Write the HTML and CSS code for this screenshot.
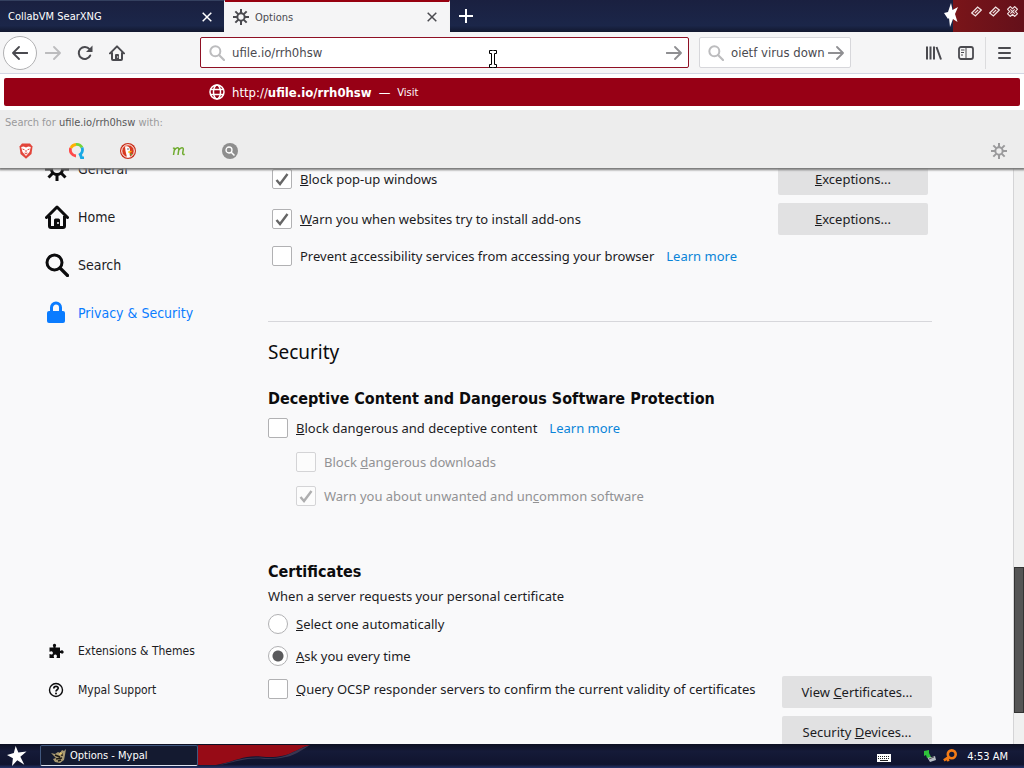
FILE: index.html
```html
<!DOCTYPE html>
<html lang="en">

<head>
    <meta charset="UTF-8">
    <meta name="viewport" content="width=device-width, initial-scale=1.0">
    <title>Options</title>
    <link rel="stylesheet" href="styles.css">
</head>

<body>

    <!-- Shared icons -->
    <svg class="sprite" aria-hidden="true">
        <symbol id="gear" viewBox="0 0 24 24">
            <circle cx="12" cy="12" r="5.5" fill="none" stroke="currentColor" stroke-width="3" />
            <path d="M12 0v6M12 18v6M0 12h6M18 12h6M3.5 3.5l4.2 4.2M16.3 16.3l4.2 4.2M20.5 3.5l-4.2 4.2M7.7 16.3l-4.2 4.2" stroke="currentColor" stroke-width="3" />
        </symbol>
        <symbol id="home" viewBox="0 0 24 24">
            <path d="M1.5 12.5L12 2l10.500 10.500" fill="none" stroke="currentColor" stroke-width="3" stroke-linecap="round" stroke-linejoin="round" />
            <path d="M4.500 11v10a1.500 1.500 0 0 0 1.500 1.500h12a1.500 1.500 0 0 0 1.500-1.500V11" fill="none" stroke="currentColor" stroke-width="3" />
            <path d="M9 23v-8a1.500 1.500 0 0 1 1.500-1.500h3A1.500 1.500 0 0 1 15 15v8z" fill="currentColor" />
            <circle cx="13" cy="18" r="1" fill="#f9f9fa" />
        </symbol>
        <symbol id="search" viewBox="0 0 24 24">
            <circle cx="9.500" cy="9.500" r="7.500" fill="none" stroke="currentColor" stroke-width="3" />
            <path d="M15 15l7.500 7.500" stroke="currentColor" stroke-width="3.200" stroke-linecap="round" />
        </symbol>
        <symbol id="arrow" viewBox="0 0 16 16">
            <path d="M0.500 8h14M9 2l6 6-6 6" fill="none" stroke="currentColor" stroke-width="1.800" stroke-linecap="round" stroke-linejoin="round" />
        </symbol>
        <symbol id="close" viewBox="0 0 10 10">
            <path d="M0.700 0.700l8.600 8.600M9.300 0.700L0.700 9.300" stroke="currentColor" stroke-width="1.500" />
        </symbol>
        <symbol id="star" viewBox="0 0 22 22">
            <path d="M9.500 0l3 7.200L21.500 6l-6.800 5.800 4.300 8.700-7.700-4.800L5.500 22l1-8.500L0 10l7.500-2.200z" fill="#fff" />
        </symbol>
        <symbol id="diamond" viewBox="0 0 10 10">
            <path d="M0.700 6.300L6 1l3.300 2.700L4 9z" fill="none" stroke="#f0e2e2" stroke-width="1.200" />
            <path d="M3.500 6.500l3-3" stroke="#f0e2e2" stroke-width="1.200" />
        </symbol>
    </svg>

    <header class="titlebar">
        <div class="tab">
            <span class="tab-title">CollabVM SearXNG</span>
            <button class="tab-close" aria-label="Close tab"><svg><use href="#close" /></svg></button>
        </div>
        <div class="tab active">
            <svg class="tab-icon"><use href="#gear" /></svg>
            <span class="tab-title">Options</span>
            <button class="tab-close" aria-label="Close tab"><svg><use href="#close" /></svg></button>
        </div>
        <button class="new-tab" aria-label="New tab">
            <svg viewBox="0 0 14 14"><path d="M7 0v14M0 7h14" stroke="currentColor" stroke-width="2" /></svg>
        </button>
        <div class="window-controls">
            <svg class="window-star" viewBox="0 0 14 24"><path d="M7 0l1.500 7L14 4l-3 7 2.500 8-4.500-3-3 8-1-9-1 1L0 10l4-1z" fill="#fff" /></svg>
            <button aria-label="Minimize"><svg><use href="#diamond" /></svg></button>
            <button aria-label="Maximize"><svg><use href="#diamond" /></svg></button>
            <button aria-label="Close"><svg viewBox="0 0 10 10"><path d="M3 0.500L5 2.500l2-2L9.500 3l-2 2 2 2L7 9.500l-2-2-2 2L0.500 7l2-2-2-2z" fill="none" stroke="#f0e2e2" /><path d="M3 3l4 4M7 3L3 7" stroke="#f0e2e2" /></svg></button>
        </div>
    </header>

    <nav class="navbar">
        <button class="back" aria-label="Back"><svg class="flip"><use href="#arrow" /></svg></button>
        <button class="tool faded" aria-label="Forward"><svg><use href="#arrow" /></svg></button>
        <button class="tool" aria-label="Reload">
            <svg viewBox="0 0 16 16"><path d="M13.200 10.500A6 6 0 1 1 12.500 4.200" fill="none" stroke="currentColor" stroke-width="2" stroke-linecap="round" /><path d="M15.500 0.500V7H9z" fill="currentColor" /></svg>
        </button>
        <button class="tool" aria-label="Home"><svg><use href="#home" /></svg></button>
        <div class="field urlbar">
            <svg class="glass"><use href="#search" /></svg>
            <input type="text" aria-label="Address" value="ufile.io/rrh0hsw">
            <button aria-label="Go"><svg><use href="#arrow" /></svg></button>
        </div>
        <div class="field searchbar">
            <svg class="glass"><use href="#search" /></svg>
            <input type="text" aria-label="Web search" value="oietf virus down">
            <button aria-label="Search"><svg><use href="#arrow" /></svg></button>
        </div>
        <div class="nav-end">
            <button class="tool" aria-label="Library">
                <svg viewBox="0 0 16 16"><path d="M1 1.500v13M4.500 1.500v13M8 1.500v13M10.500 2l4.500 12.500" fill="none" stroke="currentColor" stroke-width="2" /></svg>
            </button>
            <button class="tool" aria-label="Sidebars">
                <svg viewBox="0 0 16 16"><rect x="1" y="2" width="14" height="12" rx="2" fill="none" stroke="currentColor" stroke-width="1.800" /><path d="M8 2v12M3 5h3.500M3 7.500h3M3 10h2" fill="none" stroke="currentColor" /></svg>
            </button>
            <button class="tool menu" aria-label="Menu">
                <svg viewBox="0 0 16 16"><path d="M3 3h11M3 8h11M3 13h11" stroke="currentColor" stroke-width="2" stroke-linecap="round" /></svg>
            </button>
        </div>
        <!-- Text cursor -->
        <svg class="cursor" viewBox="0 0 8 18"><path d="M0.500 0.500h3l.5.500.5-.500h3v3h-2v11h2v3h-3l-.5-.500-.5.500h-3v-3h2v-11h-2z" fill="#fff" stroke="#000" /></svg>
    </nav>

    <div class="page">
        <div class="popup">
            <a class="result" href="#">
                <svg viewBox="0 0 16 16" fill="none" stroke="#fff" stroke-width="1.500"><circle cx="8" cy="8" r="7" /><ellipse cx="8" cy="8" rx="3.500" ry="7" /><path d="M1.500 5.500h13M1.500 10.500h13" /></svg>
                <span>http://<b>ufile.io/rrh0hsw</b></span>
                <span>—</span>
                <span class="visit">Visit</span>
            </a>
            <div class="engines">
                <p>Search for <span>ufile.io/rrh0hsw</span> with:</p>
                <div class="engine-row">
                    <button aria-label="Brave">
                        <svg viewBox="0 0 16 16"><path d="M4 0.500h8l2.500 3-1 7.500L8 15.700 2.500 11l-1-7.500z" fill="#e2453b" /><path d="M3.200 4l2.500-.5L8 4.500l2.300-1 2.500.5-1.300 5L8 13 4.500 9z" fill="#fff" /><path d="M4.500 6l2 .8M11.500 6l-2 .8M8 7v2.500M6.500 10L8 11l1.500-1" fill="none" stroke="#e2453b" /></svg>
                    </button>
                    <button aria-label="Qwant">
                        <svg viewBox="0 0 16 16" fill="none" stroke-width="2.800"><path d="M7 13A6 6 0 0 1 1.700 5" stroke="#ff4a4a" /><path d="M2 5a6 6 0 0 1 5-3.500" stroke="#ffb000" /><path d="M7 1.500a6 6 0 0 1 6 3" stroke="#75d43c" /><path d="M13 4.500A6 6 0 0 1 10 12.300M11 10l1.500 5H15" stroke="#19a9e5" /></svg>
                    </button>
                    <button aria-label="DuckDuckGo">
                        <svg viewBox="0 0 16 16"><circle cx="8" cy="8" r="8" fill="#c9301c" /><circle cx="8" cy="8" r="6.300" fill="#d93a20" stroke="#fff" /><path d="M5 3.500c3-1 5 .5 5 3.500l-.5 2 .5 5-3 .3L5.500 8z" fill="#fff" /><path d="M8 8.500l4-.8-1 1.600-2.500.7z" fill="#ffc400" /><circle cx="8" cy="6" r=".7" fill="#234" /><path d="M9.500 11l2.500-.5v2z" fill="#55ad3c" /></svg>
                    </button>
                    <button aria-label="Mojeek">
                        <svg viewBox="0 0 16 16"><path d="M2 5.500q1.500-1 1.500.5L2.500 12M3.500 7C5.500 4 8 4 7.800 6.500L7 12M7.800 7C10 4 12.500 4 12.300 6.500L11.700 10q0 2 2 1.200" fill="none" stroke="#6fab2f" stroke-width="1.500" /></svg>
                    </button>
                    <button aria-label="Other engine">
                        <svg viewBox="0 0 16 16"><circle cx="8" cy="8" r="8" fill="#8e8e8e" /><circle cx="7" cy="7" r="3" fill="none" stroke="#fff" stroke-width="1.300" /><path d="M9.200 9.200l3.300 3.300" stroke="#fff" stroke-width="1.500" /></svg>
                    </button>
                    <button class="engine-settings" aria-label="Change search settings"><svg><use href="#gear" /></svg></button>
                </div>
            </div>
        </div>

        <aside class="sidebar">
            <a class="category" href="#"><svg><use href="#gear" /></svg>General</a>
            <a class="category" href="#"><svg><use href="#home" /></svg>Home</a>
            <a class="category" href="#"><svg><use href="#search" /></svg>Search</a>
            <a class="category selected" href="#">
                <svg viewBox="0 0 24 24"><path d="M6.500 11V6.500a4.500 4.500 0 0 1 9 0V11" fill="none" stroke="currentColor" stroke-width="3" /><rect x="2" y="10" width="18" height="12" rx="2" fill="currentColor" /></svg>
                Privacy &amp; Security
            </a>
            <div class="sidebar-footer">
                <a class="extra" href="#">
                    <svg viewBox="0 0 16 16"><path d="M1.500 4.500h4c0-1-1-1.500-.5-2.800a1.700 1.700 0 0 1 3 0c.5 1.300-.5 1.800-.5 2.800H12V8c1 0 1.500-1 2.700-.6a1.800 1.800 0 0 1 0 3.200C13.500 11 13 10 12 10v5H8.500c0-1 .8-1.500.3-2.600a1.700 1.700 0 0 0-3 0c-.5 1.100.4 1.600.4 2.600H1.500v-4c1 0 1.500.8 2.500.4a1.700 1.700 0 0 0 0-3C3 8 2.500 8.800 1.500 8.800z" fill="currentColor" /></svg>
                    Extensions &amp; Themes
                </a>
                <a class="extra" href="#">
                    <svg viewBox="0 0 16 16"><circle cx="8" cy="8" r="6.500" fill="none" stroke="currentColor" stroke-width="1.400" /><path d="M5.800 6.500c0-3 4.600-2.800 4.400-.2C10.100 7.700 8 7.800 8 9.500" fill="none" stroke="currentColor" stroke-width="1.700" /><circle cx="8" cy="11.600" r="1" fill="currentColor" /></svg>
                    Mypal Support
                </a>
            </div>
        </aside>

        <main class="content">
            <section class="permissions">
                <div class="row tall">
                    <input type="checkbox" id="popups" checked>
                    <label for="popups"><u>B</u>lock pop-up windows</label>
                    <button class="btn"><u>E</u>xceptions...</button>
                </div>
                <div class="row tall">
                    <input type="checkbox" id="addons" checked>
                    <label for="addons"><u>W</u>arn you when websites try to install add-ons</label>
                    <button class="btn"><u>E</u>xceptions...</button>
                </div>
                <div class="row">
                    <input type="checkbox" id="a11y">
                    <label for="a11y">Prevent <u>a</u>ccessibility services from accessing your browser</label>
                    <a class="learn" href="#">Learn more</a>
                </div>
            </section>

            <h2>Security</h2>

            <h3>Deceptive Content and Dangerous Software Protection</h3>
            <div class="row">
                <input type="checkbox" id="deceptive">
                <label for="deceptive"><u>B</u>lock dangerous and deceptive content</label>
                <a class="learn" href="#">Learn more</a>
            </div>
            <div class="row nested">
                <input type="checkbox" id="downloads" disabled>
                <label for="downloads">Block <u>d</u>angerous downloads</label>
            </div>
            <div class="row nested">
                <input type="checkbox" id="unwanted" checked disabled>
                <label for="unwanted">Warn you about unwanted and un<u>c</u>ommon software</label>
            </div>

            <h3 class="certificates">Certificates</h3>
            <p>When a server requests your personal certificate</p>
            <div class="row short">
                <input type="radio" name="cert" id="auto">
                <label for="auto"><u>S</u>elect one automatically</label>
            </div>
            <div class="row short">
                <input type="radio" name="cert" id="ask" checked>
                <label for="ask"><u>A</u>sk you every time</label>
            </div>
            <div class="split">
                <div class="row">
                    <input type="checkbox" id="ocsp">
                    <label for="ocsp"><u>Q</u>uery OCSP responder servers to confirm the current validity of certificates</label>
                </div>
                <div class="btn-column">
                    <button class="btn">View <u>C</u>ertificates...</button>
                    <button class="btn">Security <u>D</u>evices...</button>
                </div>
            </div>
        </main>

        <div class="scrollbar"><div class="thumb"></div></div>
    </div>

    <footer class="taskbar">
        <button class="start" aria-label="Start"><svg><use href="#star" /></svg></button>
        <button class="task">
            <svg viewBox="0 0 16 14"><path d="M0 4l4 1 3-2 2 1 2-3 2 1 2-2-1 6-1 5-4 3-5-1-2-3 3-1z" fill="#a99a72" /><path d="M4 6l5 2M5 10l6-1M11 4v3M7 12l3-1" stroke="#1f1a14" stroke-width="1.500" /><path d="M9 3l3 2-4 1z" fill="#e9c96c" /></svg>
            Options - Mypal
        </button>
        <svg class="swoosh" viewBox="0 0 112 22"><path d="M0 0h112C95 5 92 13 68 12 46 9 40 16 18 20H0z" fill="#970b16" /><path d="M20 20c18-4 26-9 48-7 22 1 27-8 44-13-13 8-18 14-46 14-18-2-30 4-46 6z" fill="#3a3550" /></svg>
        <div class="tray">
            <svg class="keyboard" viewBox="0 0 14 8"><rect width="14" height="8" fill="#fff" /><path d="M1 2.500h12M1 4.500h12" stroke="#222" stroke-dasharray="1 1" /><path d="M3 6.500h8" stroke="#222" /></svg>
            <svg viewBox="0 0 14 14"><path d="M4 8l3 5 6-2-1-4-3 1z" fill="#b5bcc4" /><path d="M6 10l5-2" stroke="#555" /><path d="M1 2l5-1v3l2 4-4 1-1-3-2 1z" fill="#2fc23a" /></svg>
            <svg viewBox="0 0 16 16"><circle cx="10" cy="6" r="4.500" fill="none" stroke="#f47c16" stroke-width="3" /><path d="M7 9l-6 4M5 10l1 4" stroke="#f47c16" stroke-width="3" /></svg>
            <span class="clock">4:53 AM</span>
        </div>
    </footer>

</body>

</html>
```
FILE: styles.css
```css
* {
    box-sizing: border-box;
}

body {
    margin: 0;
    height: 100vh;
    display: flex;
    flex-direction: column;
    overflow: hidden;
    font-family: Tahoma, 'DejaVu Sans Condensed', 'Noto Sans', sans-serif;
    font-size: 14px;
    color: #1c1c1f;
    background-color: #f9f9fa;
}

button {
    font: inherit;
    color: inherit;
    border: none;
    background: none;
    padding: 0;
    cursor: pointer;
}

a {
    color: inherit;
    text-decoration: none;
}

svg {
    display: block;
    flex: none;
}

.sprite {
    position: absolute;
    width: 0;
    height: 0;
}

/* Tab strip */
.titlebar {
    display: flex;
    flex: none;
    height: 32px;
    background: linear-gradient(#1a2040, #1b2649 80%, #12182f);
    font-size: 11px;
    color: #fff;
}

.tab {
    display: flex;
    align-items: center;
    width: 225px;
    padding: 0 12px 0 8px;
    border-top: 1px solid #34405f;
    border-right: 1px solid #f4f4f4;
}

.tab.active {
    background-color: #f5f5f6;
    color: #4a4a4f;
    border-top: 2px solid #97000f;
}

.tab-icon {
    width: 16px;
    height: 16px;
    margin-right: 6px;
}

.tab-title {
    flex: 1;
}

.tab-close svg {
    width: 10px;
    height: 10px;
}

.new-tab svg {
    width: 14px;
    height: 14px;
    margin-left: 9px;
}

.window-controls {
    display: flex;
    gap: 7px;
    width: 80px;
    height: 32px;
    margin-left: auto;
    padding-right: 5px;
    background: linear-gradient(90deg, transparent 9px, #7a1519 9px, #64101a);
}

.window-controls svg {
    width: 11px;
    height: 11px;
}

.window-controls button {
    height: 22px;
}

.window-controls .window-star {
    width: 14px;
    height: 24px;
    margin: 3px 6px 0 0;
}

/* Navigation bar */
.navbar {
    position: relative;
    display: flex;
    flex: none;
    align-items: center;
    height: 42px;
    padding: 0 3px;
    background-color: #f5f5f6;
    border-bottom: 1px solid #d3d6e3;
    color: #4a4a4f;
}

.back {
    display: flex;
    align-items: center;
    justify-content: center;
    width: 34px;
    height: 34px;
    background-color: #fff;
    border: 1px solid #b1b1b3;
    border-radius: 50%;
}

.tool {
    display: flex;
    align-items: center;
    justify-content: center;
    width: 32px;
    height: 32px;
}

.back svg,
.tool svg {
    width: 16px;
    height: 16px;
}

.flip {
    transform: scaleX(-1);
}

.faded {
    color: #bcbcbe;
}

.field {
    display: flex;
    align-items: center;
    height: 31px;
    background-color: #fff;
    border: 1px solid #d7d7db;
    border-radius: 2px;
}

.field input {
    flex: 1;
    min-width: 0;
    padding: 0;
    border: none;
    outline: none;
    background: none;
    font: inherit;
    font-size: 13px;
    color: #4a4a4f;
}

.field svg {
    width: 16px;
    height: 16px;
    color: #8f8f92;
}

.field .glass {
    margin: 0 7px 0 8px;
    color: #bcbcbe;
}

.field button {
    margin-right: 6px;
}

.urlbar {
    flex: 1;
    margin-left: 67px;
    border-color: #8f1024;
}

.searchbar {
    width: 152px;
    margin: 0 67px 0 10px;
}

.nav-end {
    display: flex;
}

.menu {
    width: 36px;
    border-left: 1px solid #dcdcde;
    margin-left: 3px;
}

.cursor {
    position: absolute;
    left: 489px;
    top: 18px;
    width: 8px;
    height: 18px;
}

/* Address suggestions */
.page {
    position: relative;
    display: flex;
    flex: 1;
    min-height: 0;
    overflow: hidden;
}

.popup {
    position: absolute;
    top: 0;
    left: 0;
    right: 0;
    height: 94px;
    padding-top: 4px;
    background-color: #fff;
    box-shadow: 0 1px 2px 1px #777;
}

.result {
    display: flex;
    align-items: center;
    gap: 7px;
    height: 28px;
    margin: 0 4px;
    padding-left: 205px;
    background-color: #970015;
    border-radius: 2px;
    font-size: 13px;
    color: #fff;
}

.result svg {
    width: 16px;
    height: 16px;
}

.visit {
    font-size: 11px;
}

.engines {
    height: 58px;
    margin-top: 4px;
    background-color: #ededed;
    font-size: 11px;
    color: #9a9a9c;
}

.engines p {
    margin: 0;
    padding: 5px 5px 0;
    line-height: 16px;
}

.engines p span {
    color: #58585b;
}

.engine-row {
    display: flex;
    align-items: center;
    height: 40px;
    padding: 0 17px 0 18px;
    gap: 35px;
}

.engine-row svg {
    width: 16px;
    height: 16px;
}

.engine-settings {
    margin-left: auto;
}

/* Categories */
.sidebar {
    display: flex;
    flex: none;
    flex-direction: column;
    width: 240px;
    padding: 71px 0 35px 45px;
}

.category,
.extra {
    display: flex;
    align-items: center;
    height: 48px;
}

.category svg {
    width: 24px;
    height: 24px;
    margin-right: 9px;
    color: #0c0c0d;
}

.selected,
.selected svg {
    color: #0a7cff;
}

.sidebar-footer {
    margin-top: auto;
    font-size: 12px;
}

.extra {
    height: 39px;
}

.extra svg {
    width: 16px;
    height: 16px;
    margin: 0 14px 0 3px;
    color: #0c0c0d;
}

/* Preferences */
.content {
    flex: 1;
    max-width: 692px;
    padding: 85px 0 0 28px;
    font-family: Tahoma, 'Noto Sans', sans-serif;
    font-size: 13px;
}

.permissions {
    padding: 0 4px 48px;
    margin-bottom: 16px;
    border-bottom: 1px solid #d7d7db;
}

h2 {
    margin: 0 0 21px;
    font-size: 19px;
    font-weight: normal;
    line-height: 28px;
    color: #0c0c0d;
}

h3 {
    margin: 0;
    font-family: Tahoma, 'DejaVu Sans Condensed', sans-serif;
    font-size: 16px;
    line-height: 24px;
    color: #0c0c0d;
}

.certificates {
    margin-top: 47px;
}

.content p {
    margin: 0;
    line-height: 24px;
}

.row {
    display: flex;
    align-items: center;
    height: 34px;
    white-space: nowrap;
}

.tall {
    height: 40px;
}

.short {
    height: 32px;
}

.nested {
    padding-left: 28px;
}

.row input {
    appearance: none;
    flex: none;
    width: 20px;
    height: 20px;
    margin: 0 8px 0 0;
    background: #fff center / 18px no-repeat;
    border: 1px solid #b1b1b3;
    border-radius: 2px;
}

.row input[type="checkbox"]:checked {
    background-image: url("data:image/svg+xml,%3Csvg xmlns='http://www.w3.org/2000/svg' viewBox='0 0 18 18'%3E%3Cpath d='M3.500 10l3.500 4L14.500 4' fill='none' stroke='%23666' stroke-width='2.400'/%3E%3C/svg%3E");
}

.row input[type="radio"] {
    border-radius: 50%;
}

.row input[type="radio"]:checked {
    background-image: radial-gradient(circle, #5a5a5c 5px, transparent 6px);
}

.row input:disabled {
    opacity: 0.5;
}

.row input:disabled + label {
    color: #929294;
}

.learn {
    margin-left: 12px;
    color: #0a84d8;
}

.btn {
    width: 150px;
    height: 32px;
    background-color: #e1e1e2;
    border-radius: 2px;
}

.row .btn {
    margin-left: auto;
}

.split {
    display: flex;
    justify-content: space-between;
}

.btn-column {
    display: flex;
    flex-direction: column;
    gap: 8px;
    padding-top: 4px;
}

.scrollbar {
    display: flex;
    flex-direction: column;
    width: 11px;
    margin-left: auto;
    background-color: #f0f0f0;
    border-left: 1px solid #d4d4d6;
}

.thumb {
    height: 146px;
    margin: auto 0 31px;
    background-color: #555;
    border: 1px solid #333;
}

/* Taskbar */
.taskbar {
    display: flex;
    flex: none;
    height: 24px;
    background: linear-gradient(#0d1022, #151a38 30%, #10142e 85%, #26356b);
    font-size: 11px;
    color: #fff;
}

.start {
    width: 40px;
    padding-left: 7px;
}

.start svg {
    width: 20px;
    height: 20px;
}

.task {
    display: flex;
    align-items: center;
    gap: 3px;
    width: 158px;
    height: 21px;
    margin-top: 1px;
    padding-left: 10px;
    background-color: #141a30;
    border: 1px solid #41587e;
    border-bottom-color: #dde3ee;
    border-radius: 2px;
}

.task svg {
    width: 16px;
    height: 14px;
}

.swoosh {
    width: 112px;
    height: 22px;
    margin-top: 1px;
}

.tray {
    display: flex;
    align-items: center;
    gap: 6px;
    margin-left: auto;
    padding-right: 16px;
}

.tray svg {
    width: 14px;
    height: 14px;
}

.tray .keyboard {
    height: 8px;
    margin: 4px 26px 0 0;
}

.clock {
    margin-left: 4px;
}
```
